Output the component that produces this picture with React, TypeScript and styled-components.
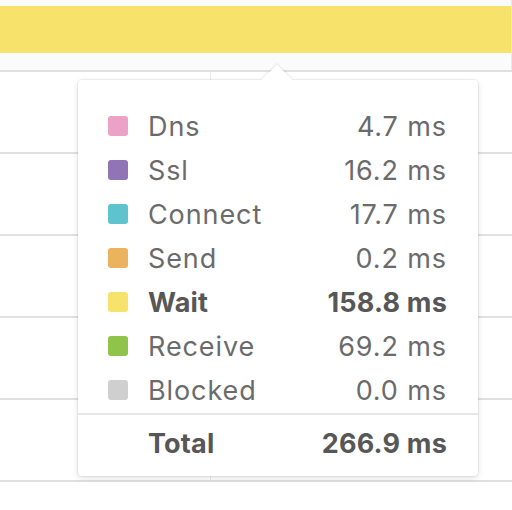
import React from "react";
import styled, { createGlobalStyle } from "styled-components";

const Global = createGlobalStyle`
  html, body { margin: 0; padding: 0; background: #ffffff; }
  body { width: 512px; height: 510px; overflow: hidden; }
  * { box-sizing: border-box; }
`;

const Page = styled.div`
  position: relative;
  width: 512px;
  height: 510px;
  font-family: Inter, "Liberation Sans", sans-serif;
`;

const Grid = styled.div`
  display: flex;
  flex-direction: column;
`;

const Row = styled.div<{ $h: number; $first?: boolean }>`
  display: grid;
  grid-template-columns: 211px 1fr;
  grid-template-rows: 1fr;
  height: ${(p) => p.$h}px;
  border-bottom: 2px solid #e0e0e0;
  background: ${(p) => (p.$first ? "#fbfbfb" : "#ffffff")};
`;

const Cell = styled.div<{ $left?: boolean }>`
  grid-row: 1;
  border-right: ${(p) => (p.$left ? "1px solid #ebebeb" : "none")};
`;

const BarTrack = styled.div`
  grid-column: 1 / -1;
  grid-row: 1;
  padding-top: 6px;
`;

const Bar = styled.div`
  height: 47px;
  background: #f7e26b;
`;

const Popup = styled.div`
  position: absolute;
  left: 78px;
  top: 80px;
  width: 400px;
  height: 396px;
  background: #ffffff;
  border-radius: 4px;
  box-shadow: 0 0 0 1px rgba(0, 0, 0, 0.05), 0 2px 6px rgba(0, 0, 0, 0.12);
  display: flex;
  flex-direction: column;
  padding-top: 24px;
`;

const Arrow = styled.div`
  position: absolute;
  left: 188px;
  top: -11px;
  width: 22px;
  height: 22px;
  background: #ffffff;
  transform: rotate(45deg);
  box-shadow: -1px -1px 2px rgba(0, 0, 0, 0.08);
`;

const List = styled.div`
  position: relative;
  display: flex;
  flex-direction: column;
  padding: 0 31px 0 30px;
`;

const Item = styled.div<{ $bold?: boolean }>`
  display: flex;
  align-items: center;
  height: 44px;
  font-size: 27px;
  letter-spacing: ${(p) => (p.$bold ? "0.2px" : "0.9px")};
  color: ${(p) => (p.$bold ? "#575757" : "#6b6b6b")};
  font-weight: ${(p) => (p.$bold ? 700 : 400)};
`;

const Swatch = styled.span<{ $c: string }>`
  width: 20px;
  height: 20px;
  border-radius: 3px;
  background: ${(p) => p.$c};
  margin-right: 20px;
  flex: none;
`;

const Spacer = styled.span`
  width: 20px;
  margin-right: 20px;
  flex: none;
`;

const Label = styled.span`
  flex: 1;
`;

const Value = styled.span`
  text-align: right;
`;

const Divider = styled.div`
  position: relative;
  height: 2px;
  background: #e6e6e6;
  margin-top: 1px;
`;

const TotalWrap = styled.div`
  display: flex;
  flex-direction: column;
  justify-content: center;
  flex: 1;
  padding: 0 31px 4px 30px;
`;

const rows = [
  { name: "Dns", value: "4.7 ms", color: "#eba2c6" },
  { name: "Ssl", value: "16.2 ms", color: "#9174b5" },
  { name: "Connect", value: "17.7 ms", color: "#5ec3cf" },
  { name: "Send", value: "0.2 ms", color: "#ecb35f" },
  { name: "Wait", value: "158.8 ms", color: "#f7e26b", bold: true },
  { name: "Receive", value: "69.2 ms", color: "#8fc34a" },
  { name: "Blocked", value: "0.0 ms", color: "#cfcfcf" },
];

export default function App() {
  return (
    <Page>
      <Global />
      <Grid>
        <Row $h={72} $first>
          <Cell $left />
          <Cell />
          <BarTrack>
            <Bar />
          </BarTrack>
        </Row>
        {[0, 1, 2, 3, 4].map((i) => (
          <Row key={i} $h={82}>
            <Cell $left />
            <Cell />
          </Row>
        ))}
      </Grid>
      <Popup>
        <Arrow />
        <List>
          {rows.map((r) => (
            <Item key={r.name} $bold={r.bold}>
              <Swatch $c={r.color} />
              <Label>{r.name}</Label>
              <Value>{r.value}</Value>
            </Item>
          ))}
        </List>
        <Divider />
        <TotalWrap>
          <Item $bold>
            <Spacer />
            <Label>Total</Label>
            <Value>266.9 ms</Value>
          </Item>
        </TotalWrap>
      </Popup>
    </Page>
  );
}
